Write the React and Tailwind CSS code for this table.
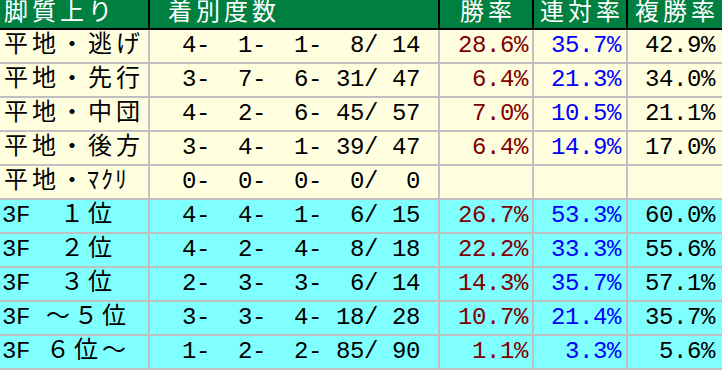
const rows = [
  { label: "平地・逃げ", count: " 4-  1-  1-  8/ 14", win: "28.6%", ren: "35.7%", fuku: "42.9%", bg: "bg-[#ffffe0]" },
  { label: "平地・先行", count: " 3-  7-  6- 31/ 47", win: "6.4%", ren: "21.3%", fuku: "34.0%", bg: "bg-[#ffffe0]" },
  { label: "平地・中団", count: " 4-  2-  6- 45/ 57", win: "7.0%", ren: "10.5%", fuku: "21.1%", bg: "bg-[#ffffe0]" },
  { label: "平地・後方", count: " 3-  4-  1- 39/ 47", win: "6.4%", ren: "14.9%", fuku: "17.0%", bg: "bg-[#ffffe0]" },
  { label: "平地・ﾏｸﾘ", count: " 0-  0-  0-  0/  0", win: "", ren: "", fuku: "", bg: "bg-[#ffffe0]" },
  { label: "3F  １位", count: " 4-  4-  1-  6/ 15", win: "26.7%", ren: "53.3%", fuku: "60.0%", bg: "bg-[#80ffff]" },
  { label: "3F  ２位", count: " 4-  2-  4-  8/ 18", win: "22.2%", ren: "33.3%", fuku: "55.6%", bg: "bg-[#80ffff]" },
  { label: "3F  ３位", count: " 2-  3-  3-  6/ 14", win: "14.3%", ren: "35.7%", fuku: "57.1%", bg: "bg-[#80ffff]" },
  { label: "3F ～５位", count: " 3-  3-  4- 18/ 28", win: "10.7%", ren: "21.4%", fuku: "35.7%", bg: "bg-[#80ffff]" },
  { label: "3F ６位～", count: " 1-  2-  2- 85/ 90", win: "1.1%", ren: "3.3%", fuku: "5.6%", bg: "bg-[#80ffff]" },
];

// full-width glyphs take two half-width cells, like the old fixed-pitch gothic
const isWide = (ch) => {
  const c = ch.codePointAt(0);
  return c >= 0x3000 && !(c >= 0xff61 && c <= 0xff9f);
};

const Cells = ({ text }) => (
  <span className="flex">
    {[...text].map((ch, i) => (
      <span
        key={i}
        className={isWide(ch) ? "w-[28px] shrink-0 text-center" : "w-[14px] shrink-0 text-center"}
      >
        {ch === " " ? "\u00a0" : ch}
      </span>
    ))}
  </span>
);

export default function App() {
  return (
    <div className="w-[722px] h-[370px] overflow-hidden bg-white text-[24px] leading-none text-black font-['Liberation_Mono','Noto_Sans_CJK_JP',monospace]">

      {/* header */}
      <div className="flex h-[30px] border-b-2 border-black bg-[#008040] text-white">
        <div className="flex w-[150px] items-center border-r-2 border-black pl-[2px]">
          <Cells text="脚質上り" />
        </div>
        <div className="flex w-[290px] items-center border-r-2 border-black pl-[16px]">
          <Cells text="着別度数" />
        </div>
        <div className="flex w-[94px] items-center justify-center border-r-2 border-black">
          <Cells text="勝率" />
        </div>
        <div className="flex w-[94px] items-center justify-center border-r-2 border-black">
          <Cells text="連対率" />
        </div>
        <div className="flex w-[94px] items-center justify-center">
          <Cells text="複勝率" />
        </div>
      </div>

      {/* body */}
      {rows.map((r) => (
        <div key={r.label} className={`flex h-[34px] border-b-2 border-[#c0c0c0] ${r.bg}`}>
          <div className="flex w-[150px] items-center border-r-2 border-[#c0c0c0] pl-[2px]">
            <Cells text={r.label} />
          </div>
          <div className="flex w-[290px] items-center border-r-2 border-[#c0c0c0] pl-[18px]">
            <Cells text={r.count} />
          </div>
          <div className="flex w-[94px] items-center justify-end border-r-2 border-[#c0c0c0] pr-[4px] text-[#800000]">
            <Cells text={r.win} />
          </div>
          <div className="flex w-[94px] items-center justify-end border-r-2 border-[#c0c0c0] pr-[5px] text-[#0000ff]">
            <Cells text={r.ren} />
          </div>
          <div className="flex w-[94px] items-center justify-end pr-[7px]">
            <Cells text={r.fuku} />
          </div>
        </div>
      ))}
    </div>
  );
}
